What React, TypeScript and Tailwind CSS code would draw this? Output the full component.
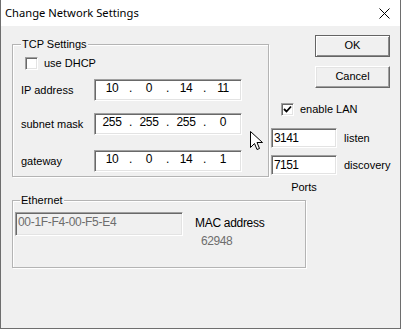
const sunken =
  'bg-white border border-t-[#a0a0a0] border-l-[#a0a0a0] border-r-white border-b-white shadow-[inset_1px_1px_0_#696969,inset_-1px_-1px_0_#e3e3e3]';

const IpField = ({ parts }: { parts: string[] }) => (
  <div className={`${sunken} w-[148px] h-[22px] flex items-center pl-[4px] pb-[3px] text-[12px] tracking-[-0.4px]`}>
    {parts.map((p, i) => (
      <div key={i} className="flex">
        <span className="w-[26px] text-center">{p}</span>
        {i < 3 && <span className="w-[11px] text-center">.</span>}
      </div>
    ))}
  </div>
);

const CheckBox = ({ checked }: { checked?: boolean }) => (
  <div className={`${sunken} w-[13px] h-[13px] flex items-center justify-center`}>
    {checked && (
      <svg width="9" height="9" viewBox="0 0 9 9">
        <path d="M1 4 L3.5 6.5 L8 1.5" stroke="#000" strokeWidth="1.8" fill="none" />
      </svg>
    )}
  </div>
);

const Group = ({
  label,
  labelLeft,
  className,
  children,
}: {
  label: string;
  labelLeft: string;
  className: string;
  children: React.ReactNode;
}) => (
  <div className={`relative border border-[#b4b4b4] shadow-[1px_1px_0_#fff,inset_1px_1px_0_#fff] ${className}`}>
    <span className={`absolute -top-[7px] ${labelLeft} px-[1px] bg-[#f0f0f0] leading-[13px]`}>{label}</span>
    {children}
  </div>
);

const Button = ({ label, isDefault }: { label: string; isDefault?: boolean }) => (
  <button
    className={`w-[75px] h-[22px] bg-[#f0f0f0] text-[11px] leading-[13px] pb-[1px] border ${
      isDefault
        ? 'border-[#646464] shadow-[inset_1px_1px_0_#fff,inset_-1px_-1px_0_#8c8c8c]'
        : 'border-t-white border-l-white border-r-[#696969] border-b-[#696969] shadow-[inset_-1px_-1px_0_#a0a0a0,inset_1px_1px_0_#e3e3e3]'
    }`}
  >
    {label}
  </button>
);

export default function App() {
  return (
    <div
      className="relative w-[401px] h-[329px] flex flex-col border-x border-b border-[#6e6e6e] bg-[#f0f0f0] text-[11px] leading-[13px] text-black"
      style={{ fontFamily: '"Liberation Sans", Arial, sans-serif' }}
    >
      {/* title bar */}
      <div className="h-[26px] bg-white flex items-center justify-between pl-[4px] pr-[10px]">
        <span className="text-[11.2px] pb-[1px]" style={{ fontFamily: '"Noto Sans", "Open Sans", sans-serif' }}>
          Change Network Settings
        </span>
        <svg width="11" height="11" viewBox="0 0 11 11">
          <path d="M0.5 0.5 L10.5 10.5 M10.5 0.5 L0.5 10.5" stroke="#000" strokeWidth="1" />
        </svg>
      </div>

      <div className="flex-1 flex flex-col">
        <div className="flex items-start">
          <Group label="TCP Settings" labelLeft="left-[8px]" className="ml-[11px] mt-[18px] w-[257px] h-[133px]">
            <div className="flex flex-col">
              <div className="flex items-center ml-[12px] mt-[12px] gap-[6px]">
                <CheckBox />
                <span>use DHCP</span>
              </div>
              <div className="flex items-center mt-[9px] pl-[8px]">
                <span className="w-[73px]">IP address</span>
                <IpField parts={['10', '0', '14', '11']} />
              </div>
              <div className="flex items-center mt-[12px] pl-[8px]">
                <span className="w-[73px]">subnet mask</span>
                <IpField parts={['255', '255', '255', '0']} />
              </div>
              <div className="flex items-center mt-[15px] pl-[8px]">
                <span className="w-[73px]">gateway</span>
                <IpField parts={['10', '0', '14', '1']} />
              </div>
            </div>
          </Group>

          <div className="flex flex-col">
            <div className="ml-[46px] mt-[9px] flex flex-col gap-[9px]">
              <Button label="OK" isDefault />
              <Button label="Cancel" />
            </div>
            <div className="flex items-center ml-[12px] mt-[15px] gap-[6px]">
              <CheckBox checked />
              <span>enable LAN</span>
            </div>
            <div className="flex items-center ml-[2px] mt-[12px] gap-[7px]">
              <div className={`${sunken} w-[66px] h-[20px] pl-[2px] flex items-center text-[12px] tracking-[-0.6px]`}>3141</div>
              <span>listen</span>
            </div>
            <div className="flex items-center ml-[2px] mt-[7px] gap-[7px]">
              <div className={`${sunken} w-[66px] h-[20px] pl-[2px] flex items-center text-[12px] tracking-[-0.6px]`}>7151</div>
              <span>discovery</span>
            </div>
            <div className="ml-[2px] mt-[6px] w-[66px] text-center">Ports</div>
          </div>
        </div>

        <Group label="Ethernet" labelLeft="left-[7px]" className="ml-[11px] mt-[6px] w-[294px] h-[68px]">
          <div className="flex items-start ml-[2px] mt-[11px]">
            <div className="w-[168px] h-[24px] bg-[#f0f0f0] border border-t-[#a0a0a0] border-l-[#a0a0a0] border-r-white border-b-white shadow-[inset_1px_1px_0_#696969,inset_-1px_-1px_0_#e3e3e3] pl-[2px] pt-[3px] text-[#6d6d6d] text-[12px] tracking-[-0.3px]">
              00-1F-F4-00-F5-E4
            </div>
            <div className="flex flex-col ml-[12px] mt-[5px]">
              <span className="text-[12px] tracking-[-0.3px]">MAC address</span>
              <span className="ml-[6px] mt-[5px] text-[#6d6d6d] text-[12px] tracking-[-0.4px]">62948</span>
            </div>
          </div>
        </Group>
      </div>

      {/* mouse pointer */}
      <svg className="absolute left-[249px] top-[131px]" width="13" height="20" viewBox="0 0 13 20">
        <path
          d="M0.5 0.5 L0.5 16.5 L4.5 12.5 L7 18.5 L9.5 17.5 L7 11.5 L12.5 11.5 Z"
          fill="#fff"
          stroke="#000"
          strokeWidth="1"
          strokeLinejoin="miter"
        />
      </svg>
    </div>
  );
}
